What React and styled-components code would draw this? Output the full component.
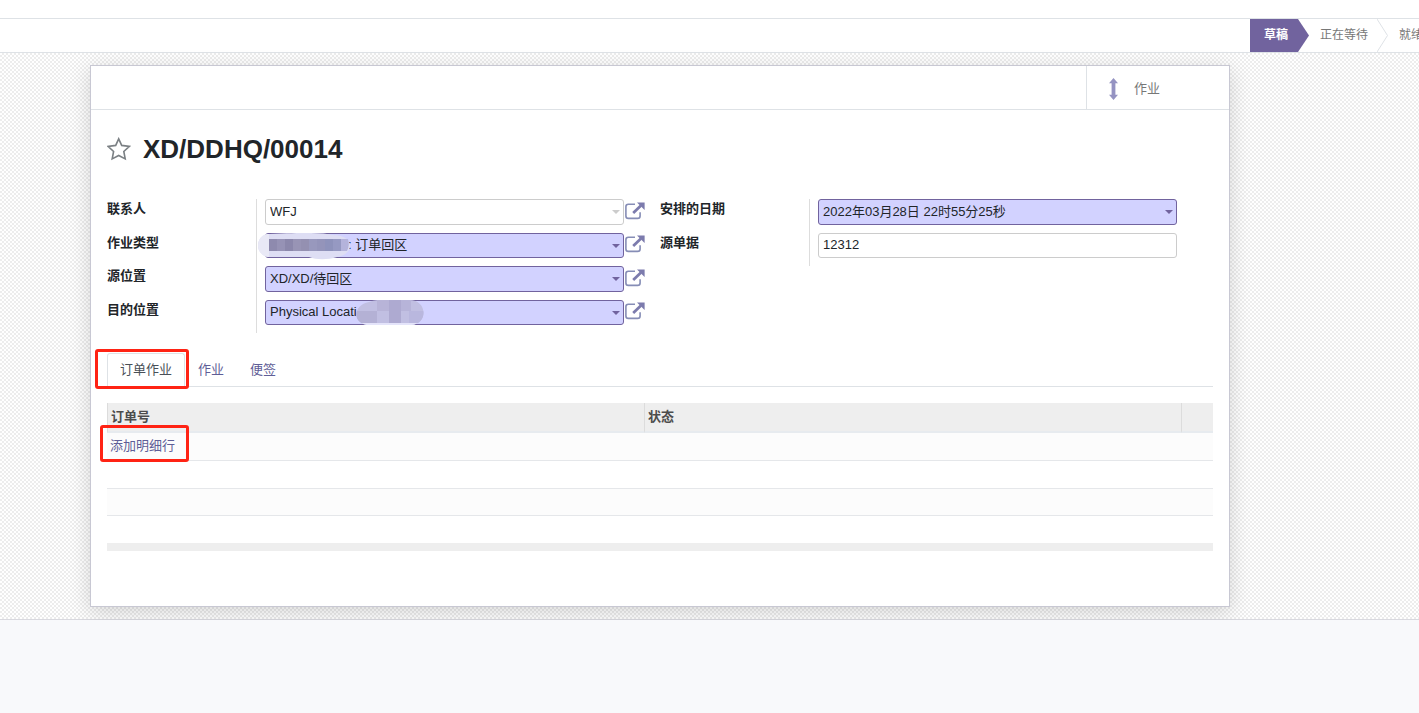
import React from "react";
import styled, { createGlobalStyle, css } from "styled-components";

const purple = "#71639e";
const line = "#dee2e6";

const GlobalStyle = createGlobalStyle`
  *, *::before, *::after { box-sizing: border-box; }
  body {
    margin: 0;
    background: #f8f9fb;
    color: #212529;
    font: 13px/20px "Liberation Sans", "Noto Sans CJK SC", sans-serif;
    overflow-x: hidden;
  }
  button, input, select { font: inherit; color: inherit; }
`;

const TopBar = styled.header`
  height: 18px;
  background: #fff;
`;

const StatusBar = styled.div`
  display: flex;
  justify-content: flex-end;
  height: 35px;
  background: #fff;
  border: solid ${line};
  border-width: 1px 0;
`;

const StatusSteps = styled.div`
  display: flex;
  width: 169px;
  overflow: hidden;
`;

const Step = styled.button`
  position: relative;
  flex: none;
  height: 33px;
  padding: ${(p) => (p.$active ? "0 10px 2px 14px" : "0 9px 2px 22px")};
  border: 0;
  font-size: 12px;
  line-height: 20px;
  font-weight: ${(p) => (p.$active ? "bold" : "normal")};
  background: ${(p) => (p.$active ? purple : "#fff")};
  color: ${(p) => (p.$active ? "#fff" : "#777")};
`;

const StepArrow = styled.svg`
  position: absolute;
  z-index: 1;
  top: 0;
  left: 100%;
  width: 11px;
  height: 33px;
`;

const FormArea = styled.main`
  display: flow-root;
  border-bottom: 1px solid #d9d9df;
  background: repeating-conic-gradient(#ededed 0% 25%, #fff 0% 50%) 0 0 / 4px 4px;
`;

const Sheet = styled.section`
  max-width: 1140px;
  min-height: 542px;
  margin: 12px 90px;
  background: #fff;
  border: 1px solid #c8c8d3;
  box-shadow: 0 5px 20px rgba(0, 0, 0, 0.16);
`;

const ButtonBox = styled.div`
  display: flex;
  justify-content: flex-end;
  height: 44px;
  border-bottom: 1px solid ${line};
`;

const StatButton = styled.button`
  display: flex;
  align-items: center;
  gap: 16px;
  width: 143px;
  padding: 2px 0 0 22px;
  border: 0;
  border-left: 1px solid ${line};
  background: transparent;
  color: #777;
`;

const SheetBody = styled.div`
  padding: 20px 16px 0;
`;

const TitleRow = styled.div`
  display: flex;
  align-items: center;
  gap: 12px;
  height: 38px;
`;

const StarButton = styled.button`
  display: flex;
  padding: 0;
  border: 0;
  background: transparent;
`;

const Title = styled.h1`
  margin: 0;
  font-size: 26px;
  line-height: 36px;
`;

const Groups = styled.div`
  display: grid;
  grid-template-columns: 1fr 1fr;
  align-items: start;
  margin-top: 31px;
`;

const Group = styled.div`
  display: grid;
  grid-auto-rows: 1fr;
  height: ${(p) => (p.$rows === 4 ? 134 : 67)}px;
`;

const FieldRow = styled.div`
  display: grid;
  grid-template-columns: 150px 1fr;
`;

const Label = styled.label`
  border-right: 1px solid #ddd;
  font-weight: bold;
  line-height: 20px;
`;

const FieldCell = styled.div`
  display: flex;
  padding: 0 0 8px 8px;
`;

const ControlWrap = styled.div`
  position: relative;
  flex: 1;
  margin-right: ${(p) => (p.$link ? 0 : 36)}px;
`;

const controlStyle = css`
  display: block;
  appearance: none;
  width: 100%;
  height: 100%;
  padding: 0 4px;
  border: 1px solid ${(p) => (p.$required ? purple : "#ccc")};
  border-radius: 3px;
  outline: 0;
  background: ${(p) => (p.$required ? "#d2d2ff" : "#fff")};
`;

const Input = styled.input`
  ${controlStyle}
  padding-bottom: 2px;
`;

const Select = styled.select`
  ${controlStyle}
  padding-left: ${(p) => (p.$indent ? 82 : 4)}px;
`;

const Caret = styled.span`
  position: absolute;
  top: 11px;
  right: 4px;
  border: 4px solid transparent;
  border-bottom-width: 0;
  border-top-color: ${(p) => (p.$required ? purple : "#ccc")};
  pointer-events: none;
`;

const Mask = styled.svg`
  position: absolute;
  top: 0;
  left: ${(p) => p.$left}px;
  pointer-events: none;
`;

const OpenButton = styled.button`
  flex: none;
  display: flex;
  align-items: center;
  width: 36px;
  padding: 0 0 2px 1px;
  border: 0;
  background: transparent;
`;

const Tabs = styled.div`
  display: flex;
  height: 34px;
  margin-top: 20px;
  border-bottom: 1px solid ${line};
`;

const Tab = styled.button`
  position: relative;
  height: 34px;
  padding: 0 12px;
  border: 1px solid transparent;
  border-radius: 3px 3px 0 0;
  background: transparent;
  color: ${(p) => (p.$active ? "#495057" : "#5f5e97")};
  ${(p) =>
    p.$active &&
    css`
      background: #fff;
      border-color: ${line} ${line} #fff;
    `}
`;

const Highlight = styled.span`
  position: absolute;
  z-index: 2;
  inset: ${(p) => p.$inset};
  border: 3px solid #ff2314;
  border-radius: 3px;
  pointer-events: none;
`;

const Table = styled.table`
  width: 100%;
  margin-top: 16px;
  border-collapse: separate;
  border-spacing: 0;
  table-layout: fixed;
`;

const HeadCell = styled.th`
  height: 30px;
  padding: 0 3px;
  background: #eee;
  border-left: 1px solid ${(p) => (p.$plain ? "#eee" : "#dcdcdc")};
  border-bottom: 2px solid #e7ebef;
  color: #4c4c4c;
  text-align: left;
  width: ${(p) => (p.$narrow ? "32px" : "auto")};
`;

const Cell = styled.td`
  position: ${(p) => (p.$marked ? "relative" : "static")};
  height: ${(p) => (p.$tall ? 28 : 27)}px;
  padding: 0 3px 2px;
  border-bottom: 1px solid ${(p) => (p.$last ? "#fff" : "#e5e7ea")};
  background: ${(p) => (p.$striped ? "#fcfcfc" : "#fff")};
`;

const FootCell = styled.td`
  height: 8px;
  padding: 0;
  background: #eee;
`;

const AddLink = styled.a`
  color: #5f5e97;
  text-decoration: none;
`;

function ExternalIcon() {
  return (
    <svg width="20" height="18" viewBox="0 0 20 18" fill="none" aria-hidden="true">
      <path
        d="M10 2.2H3.4Q.9 2.2.9 4.7v9.2q0 2.5 2.5 2.5h9.2q2.5 0 2.5-2.5v-3.6"
        stroke="#868db6"
        strokeWidth="1.6"
      />
      <path d="M8.2 11 16 3.6" stroke="#7c7bad" strokeWidth="2.8" />
      <path d="M12 .6h7.6v7.4z" fill="#7c7bad" />
    </svg>
  );
}

function StarIcon() {
  return (
    <svg width="24" height="24" viewBox="0 0 24 24" aria-hidden="true">
      <path
        d="M11.7 1.8 14.7 8.4l7.7 1-5.6 5.1 1.4 7.4-6.5-3.4-6.5 3.4 1.4-7.4L1 9.4l7.7-1z"
        fill="none"
        stroke="#7b8084"
        strokeWidth="1.6"
      />
    </svg>
  );
}

const SmudgeWide = () => (
  <Mask $left={-7} width="94" height="27" viewBox="0 0 94 27" aria-hidden="true">
    <path
      d="M12 1C28 0 40 0 53 0q14 0 22 2c22 0 22 19 4 22-10 3-20 3-28 0H14C-4 25-5 2 12 1z"
      fill="#dedef4"
    />
    <path d="M0 12C1 3 6 1 11 1v23C5 24 0 19 0 12z" fill="#e9e9f6" />
    {["#8e8aae", "#9692b5", "#8b87ab", "#9894b5", "#9490b1", "#9898bd", "#9494ba", "#8e92bb", "#9699c2"].map(
      (fill, i) => (
        <rect key={i} x={11 + i * 8} y="6" width="8" height="12" fill={fill} />
      )
    )}
    <path d="M83 6h7q2 6-1 12h-6z" fill="#b4b3db" />
  </Mask>
);

const SmudgeShort = () => (
  <Mask $left={91} width="68" height="26" viewBox="0 0 68 26" aria-hidden="true">
    <defs>
      <clipPath id="smudge-short">
        <path d="M13 2Q20-1 35 0h18c19 0 19 24 2 25H14C-4 25-4 5 13 2z" />
      </clipPath>
    </defs>
    <g clipPath="url(#smudge-short)">
      <rect width="68" height="26" fill="#c1bfe2" />
      <rect y="11" width="21" height="12" fill="#b4b1d5" />
      <rect x="21" width="12" height="11" fill="#b8b4d8" />
      <rect x="33" width="12" height="23" fill="#aeaad1" />
      <rect x="45" width="10" height="11" fill="#b7b4d9" />
      <rect x="53" y="11" width="15" height="12" fill="#b9b7de" />
      <rect y="23" width="68" height="3" fill="#e4e4fa" />
    </g>
  </Mask>
);

function Field({ id, label, value, required, kind = "select", indent, mask }) {
  const link = kind === "select";
  return (
    <FieldRow>
      <Label htmlFor={id}>{label}</Label>
      <FieldCell>
        <ControlWrap $link={link}>
          {link ? (
            <Select id={id} $required={required} $indent={indent}>
              <option>{value}</option>
            </Select>
          ) : (
            <Input id={id} defaultValue={value} $required={required} />
          )}
          {kind !== "text" && <Caret $required={required} />}
          {mask}
        </ControlWrap>
        {link && (
          <OpenButton type="button" aria-label={label}>
            <ExternalIcon />
          </OpenButton>
        )}
      </FieldCell>
    </FieldRow>
  );
}

export default function App() {
  return (
    <>
      <GlobalStyle />
      <TopBar />
      <StatusBar>
        <StatusSteps>
          <Step type="button" $active>
            草稿
            <StepArrow viewBox="0 0 11 33" aria-hidden="true">
              <path d="M0 0 11 16.5 0 33z" fill={purple} />
            </StepArrow>
          </Step>
          <Step type="button">
            正在等待
            <StepArrow viewBox="0 0 11 33" aria-hidden="true">
              <path d="M0 0 10.5 16.5 0 33" fill="#fff" stroke={line} />
            </StepArrow>
          </Step>
          <Step type="button">就绪</Step>
        </StatusSteps>
      </StatusBar>
      <FormArea>
        <Sheet>
          <ButtonBox>
            <StatButton type="button">
              <svg width="9" height="22" viewBox="0 0 9 22" aria-hidden="true">
                <path d="M4.5 0 9 5.2H6.4v11.6H9L4.5 22 0 16.8h2.6V5.2H0z" fill="#9593c2" />
              </svg>
              作业
            </StatButton>
          </ButtonBox>
          <SheetBody>
            <TitleRow>
              <StarButton type="button" aria-label="XD/DDHQ/00014">
                <StarIcon />
              </StarButton>
              <Title>XD/DDHQ/00014</Title>
            </TitleRow>
            <Groups>
              <Group $rows={4}>
                <Field id="partner" label="联系人" value="WFJ" />
                <Field id="type" label="作业类型" value=": 订单回区" required indent mask={<SmudgeWide />} />
                <Field id="source" label="源位置" value="XD/XD/待回区" required />
                <Field id="target" label="目的位置" value="Physical Locati" required mask={<SmudgeShort />} />
              </Group>
              <Group $rows={2}>
                <Field id="date" label="安排的日期" value="2022年03月28日 22时55分25秒" kind="date" required />
                <Field id="origin" label="源单据" value="12312" kind="text" />
              </Group>
            </Groups>
            <Tabs role="tablist">
              <Tab type="button" role="tab" aria-selected="true" $active>
                订单作业
                <Highlight $inset="-5px -5px -3px -13px" />
              </Tab>
              <Tab type="button" role="tab">作业</Tab>
              <Tab type="button" role="tab">便签</Tab>
            </Tabs>
            <Table>
              <thead>
                <tr>
                  <HeadCell>订单号</HeadCell>
                  <HeadCell>状态</HeadCell>
                  <HeadCell $narrow aria-hidden="true" />
                </tr>
              </thead>
              <tbody>
                <tr>
                  <Cell colSpan={3} $striped $tall $marked>
                    <AddLink href="#add">添加明细行</AddLink>
                    <Highlight $inset="-8px calc(100% - 82px) -2px -7px" />
                  </Cell>
                </tr>
                <tr><Cell colSpan={3} $tall /></tr>
                <tr><Cell colSpan={3} $striped /></tr>
                <tr><Cell colSpan={3} $last /></tr>
              </tbody>
              <tfoot>
                <tr><FootCell colSpan={3} /></tr>
              </tfoot>
            </Table>
          </SheetBody>
        </Sheet>
      </FormArea>
    </>
  );
}
